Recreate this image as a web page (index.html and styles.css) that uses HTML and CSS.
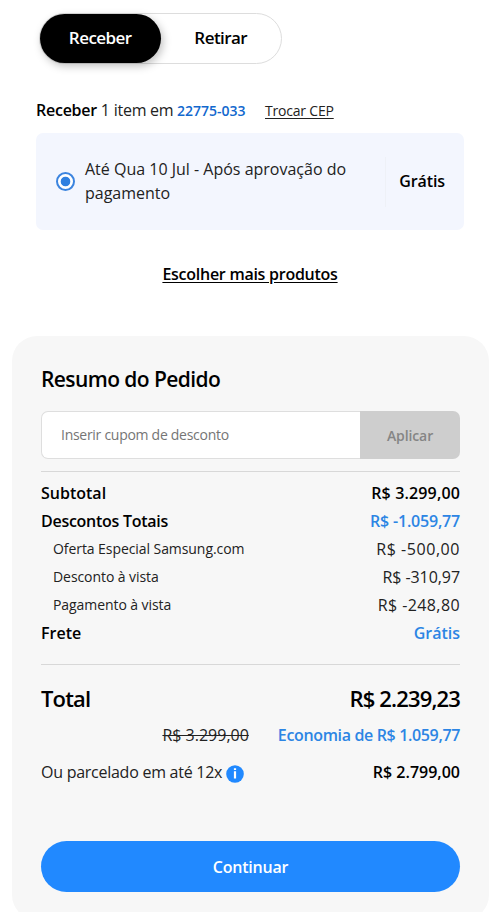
FILE: index.html
```html
<!DOCTYPE html>
<html lang="pt-BR">
<head>
  <meta charset="UTF-8">
  <meta name="viewport" content="width=device-width, initial-scale=1.0">
  <title>Carrinho</title>
  <link rel="stylesheet" href="styles.css">
</head>
<body>
  <section class="delivery">
    <div class="tabs">
      <button class="tab active" type="button">Receber</button>
      <button class="tab" type="button">Retirar</button>
    </div>

    <div class="shipping-info">
      <span class="info-text"><b>Receber</b> 1 item em</span>
      <span class="cep">22775-033</span>
      <a class="change-cep" href="#">Trocar CEP</a>
    </div>

    <div class="option">
      <span class="radio"></span>
      <p class="option-text">Até Qua 10 Jul - Após aprovação do pagamento</p>
      <div class="option-price">Grátis</div>
    </div>

    <a class="more" href="#">Escolher mais produtos</a>
  </section>

  <section class="summary">
    <h2>Resumo do Pedido</h2>

    <form class="coupon">
      <input type="text" placeholder="Inserir cupom de desconto">
      <button type="button">Aplicar</button>
    </form>

    <div class="rows">
      <div class="row strong"><span>Subtotal</span><span class="subtotal-price">R$ 3.299,00</span></div>
      <div class="row strong"><span class="discounts">Descontos Totais</span><span class="discounts-price blue">R$ -1.059,77</span></div>
      <div class="row sub"><span>Oferta Especial Samsung.com</span><span class="price wide">R$ -500,00</span></div>
      <div class="row sub"><span>Desconto à vista</span><span class="price">R$ -310,97</span></div>
      <div class="row sub"><span>Pagamento à vista</span><span class="price medium">R$ -248,80</span></div>
      <div class="row strong"><span>Frete</span><span class="blue">Grátis</span></div>
    </div>

    <div class="row total"><span>Total</span><span>R$ 2.239,23</span></div>
    <div class="row savings"><s>R$ 3.299,00</s><span class="economy blue">Economia de R$ 1.059,77</span></div>
    <div class="row installments">
      <span class="plan">
        <span class="plan-text">Ou parcelado em até 12x</span>
        <svg class="info-icon" viewBox="0 0 18 18">
          <circle cx="9" cy="9" r="8.8" fill="#2189ff"/>
          <path d="M7.9 3.2h2.2v1.9H7.9zM7.9 6.2h2.2v7.3H7.9z" fill="#fff"/>
        </svg>
      </span>
      <span class="plan-price">R$ 2.799,00</span>
    </div>

    <button class="submit-btn" type="button">Continuar</button>
  </section>
</body>
</html>
```

FILE: styles.css
```css
* { box-sizing: border-box; margin: 0; padding: 0; }
body {
  height: 912px;
  overflow: hidden;
  background-color: #fff;
  color: #000;
  font-family: "Open Sans", "Noto Sans", sans-serif;
  font-size: 16px;
}
button, input {
  border: none;
  font-family: inherit;
}
span, a, s { white-space: nowrap; }
.blue { color: #2c85e4; }

.delivery {
  display: flex;
  flex-direction: column;
  height: 336px;
  padding: 13px 36px 0;
}

/* Receber / Retirar */
.tabs {
  display: flex;
  width: 243px;
  height: 51px;
  margin-left: 3px;
  border: 1px solid #ddd;
  border-radius: 26px;
}
.tab {
  flex: 1;
  padding-bottom: 2px;
  border-radius: 26px;
  background: none;
  color: #000;
  font-size: 17px;
  font-weight: 600;
  letter-spacing: -0.55px;
}
.tab.active {
  background-color: #000;
  color: #fff;
  box-shadow: 2px 3px 8px rgba(0,0,0,0.25);
}

.shipping-info {
  display: flex;
  align-items: baseline;
  height: 24px;
  margin-top: 34px;
  line-height: 24px;
}
.info-text {
  width: 141px;
  color: #222;
  letter-spacing: -0.25px;
}
.info-text b {
  color: #000;
  font-weight: 600;
}
.cep {
  width: 88px;
  color: #1268ce;
  font-size: 14px;
  font-weight: 600;
}
.change-cep {
  color: #222;
  font-size: 14px;
  letter-spacing: -0.2px;
  text-underline-offset: 2px;
}

.option {
  display: flex;
  align-items: center;
  width: 428px;
  height: 97px;
  margin-top: 11px;
  padding: 0 19px 0 20px;
  border-radius: 7px;
  background-color: #f3f6fe;
}
.radio {
  width: 19px;
  height: 19px;
  border: 2px solid #3b84df;
  border-radius: 50%;
  background: radial-gradient(circle, #2f80e0 4.4px, #fff 5.2px);
}
.option-text {
  flex: 1;
  margin-left: 10px;
  padding: 0 30px 2px 0;
  color: #222;
  line-height: 24px;
}
.option-price {
  display: flex;
  align-items: center;
  justify-content: flex-end;
  width: 60px;
  height: 50px;
  padding-bottom: 2px;
  border-left: 1px solid #eef1f7;
  font-weight: 600;
  letter-spacing: -0.1px;
}

.more {
  align-self: center;
  margin-top: 32px;
  color: #000;
  font-weight: 600;
  letter-spacing: -0.26px;
  line-height: 24px;
  text-underline-offset: 2px;
}

.summary {
  width: 477px;
  height: 584px;
  margin-left: 12px;
  padding: 29px 29px 0;
  border-radius: 25px;
  background-color: #f7f7f7;
}
h2 {
  font-size: 21px;
  font-weight: 600;
  letter-spacing: -0.58px;
  line-height: 28px;
}

.coupon {
  display: flex;
  height: 48px;
  margin-top: 18px;
}
.coupon input {
  width: 319px;
  padding: 0 0 1px 19px;
  border: 1px solid #dedede;
  border-right: none;
  border-radius: 7px 0 0 7px;
  background-color: #fff;
  font-size: 14px;
  letter-spacing: -0.28px;
}
.coupon input::placeholder { color: #757575; }
.coupon button {
  flex: 1;
  border-radius: 0 7px 7px 0;
  background-color: #cecece;
  color: #858585;
  font-size: 14px;
  font-weight: 600;
  letter-spacing: -0.1px;
}

.rows {
  height: 194px;
  margin-top: 12px;
  padding-top: 7px;
  border-top: 1px solid #d8d8d8;
  border-bottom: 1px solid #d8d8d8;
}
.row {
  display: flex;
  align-items: baseline;
  justify-content: space-between;
  height: 28px;
  line-height: 28px;
}
.strong { font-weight: 600; }
.subtotal-price { letter-spacing: 0.15px; }
.discounts { letter-spacing: -0.27px; }
.discounts-price { letter-spacing: -0.2px; }
.sub {
  align-items: flex-start;
  padding-left: 12px;
  color: #222;
  font-size: 14px;
  letter-spacing: -0.07px;
}
.sub .price { font-size: 16px; }
.sub .medium { letter-spacing: 0.4px; }
.sub .wide { letter-spacing: 0.55px; }

.total {
  margin-top: 19px;
  font-size: 22px;
  font-weight: 600;
  letter-spacing: -0.85px;
}
.savings {
  justify-content: flex-end;
  gap: 29px;
  margin-top: 9px;
}
.savings s { color: #222; }
.economy {
  font-weight: 600;
  letter-spacing: -0.35px;
}
.installments { margin-top: 9px; }
.plan {
  display: flex;
  align-items: center;
  gap: 4px;
  color: #222;
}
.plan-text { letter-spacing: -0.26px; }
.info-icon {
  width: 18px;
  height: 18px;
  margin-top: 3px;
}
.plan-price { font-weight: 600; }

.submit-btn {
  width: 100%;
  height: 51px;
  margin-top: 55px;
  border-radius: 26px;
  background-color: #2189ff;
  color: #fff;
  font-size: 16px;
  font-weight: 600;
  letter-spacing: -0.2px;
}
```
